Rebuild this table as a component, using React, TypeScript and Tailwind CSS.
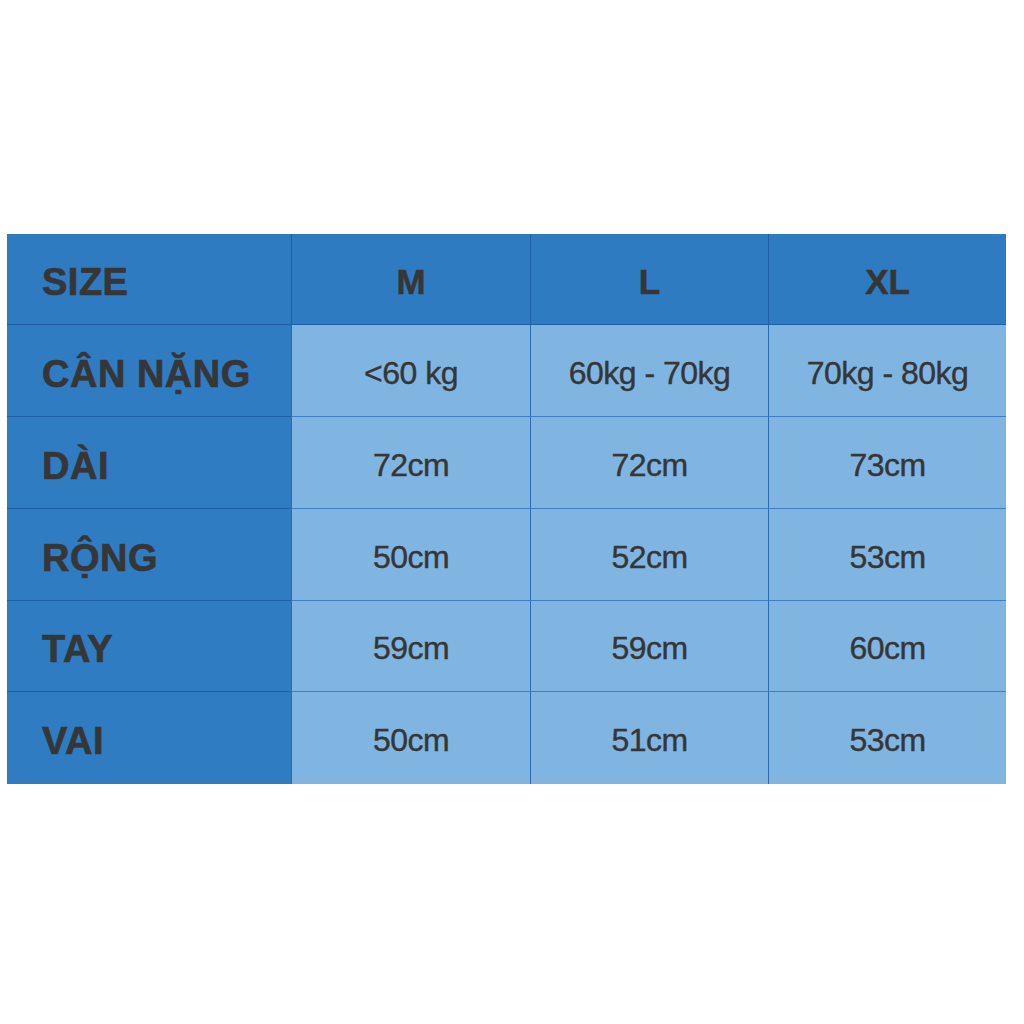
const sizes = ['M', 'L', 'XL']

const rows = [
  { label: 'CÂN NẶNG', values: ['<60 kg', '60kg - 70kg', '70kg - 80kg'] },
  { label: 'DÀI', values: ['72cm', '72cm', '73cm'] },
  { label: 'RỘNG', values: ['50cm', '52cm', '53cm'] },
  { label: 'TAY', values: ['59cm', '59cm', '60cm'] },
  { label: 'VAI', values: ['50cm', '51cm', '53cm'] },
]

export default function App() {
  return (
    <div className="w-[1024px] h-[1024px] bg-white pt-[234px] pl-[7px] font-['Liberation_Sans',Arial,sans-serif]">
      <div className="grid grid-cols-[284px_239px_238px_238px] grid-rows-[91px_92px_92px_92px_91px_92px] w-[999px] text-[#363636]">
        {/* header row */}
        <div className="bg-[#2e7bc1] border-b border-[#1d5ea6] flex items-center pl-[35px] pt-[7px] text-[38px] font-bold tracking-[0.5px] [-webkit-text-stroke:0.7px_#363636]">
          SIZE
        </div>
        {sizes.map((s) => (
          <div
            key={s}
            className="bg-[#2e7bc1] border-b border-l border-[#1d5ea6] flex items-center justify-center pt-[6px] text-[35px] font-bold [-webkit-text-stroke:0.5px_#363636]"
          >
            {s}
          </div>
        ))}

        {rows.map((row, i) => (
          <>
            <div
              key={row.label}
              className={`bg-[#2f7cc2] flex items-center pl-[35px] pt-[7px] text-[38px] font-bold tracking-[0.5px] [-webkit-text-stroke:0.7px_#363636] ${
                i < rows.length - 1 ? 'border-b border-[#1d5ea6]' : ''
              }`}
            >
              {row.label}
            </div>
            {row.values.map((v, j) => (
              <div
                key={row.label + j}
                className={`bg-[#80b5e2] border-l border-[#2a6bb2] flex items-center justify-center pt-[4px] text-[32px] tracking-[-0.5px] [-webkit-text-stroke:0.4px_#363636] ${
                  i < rows.length - 1 ? 'border-b border-b-[#3f7fc2]' : ''
                }`}
              >
                {v}
              </div>
            ))}
          </>
        ))}
      </div>
    </div>
  )
}
